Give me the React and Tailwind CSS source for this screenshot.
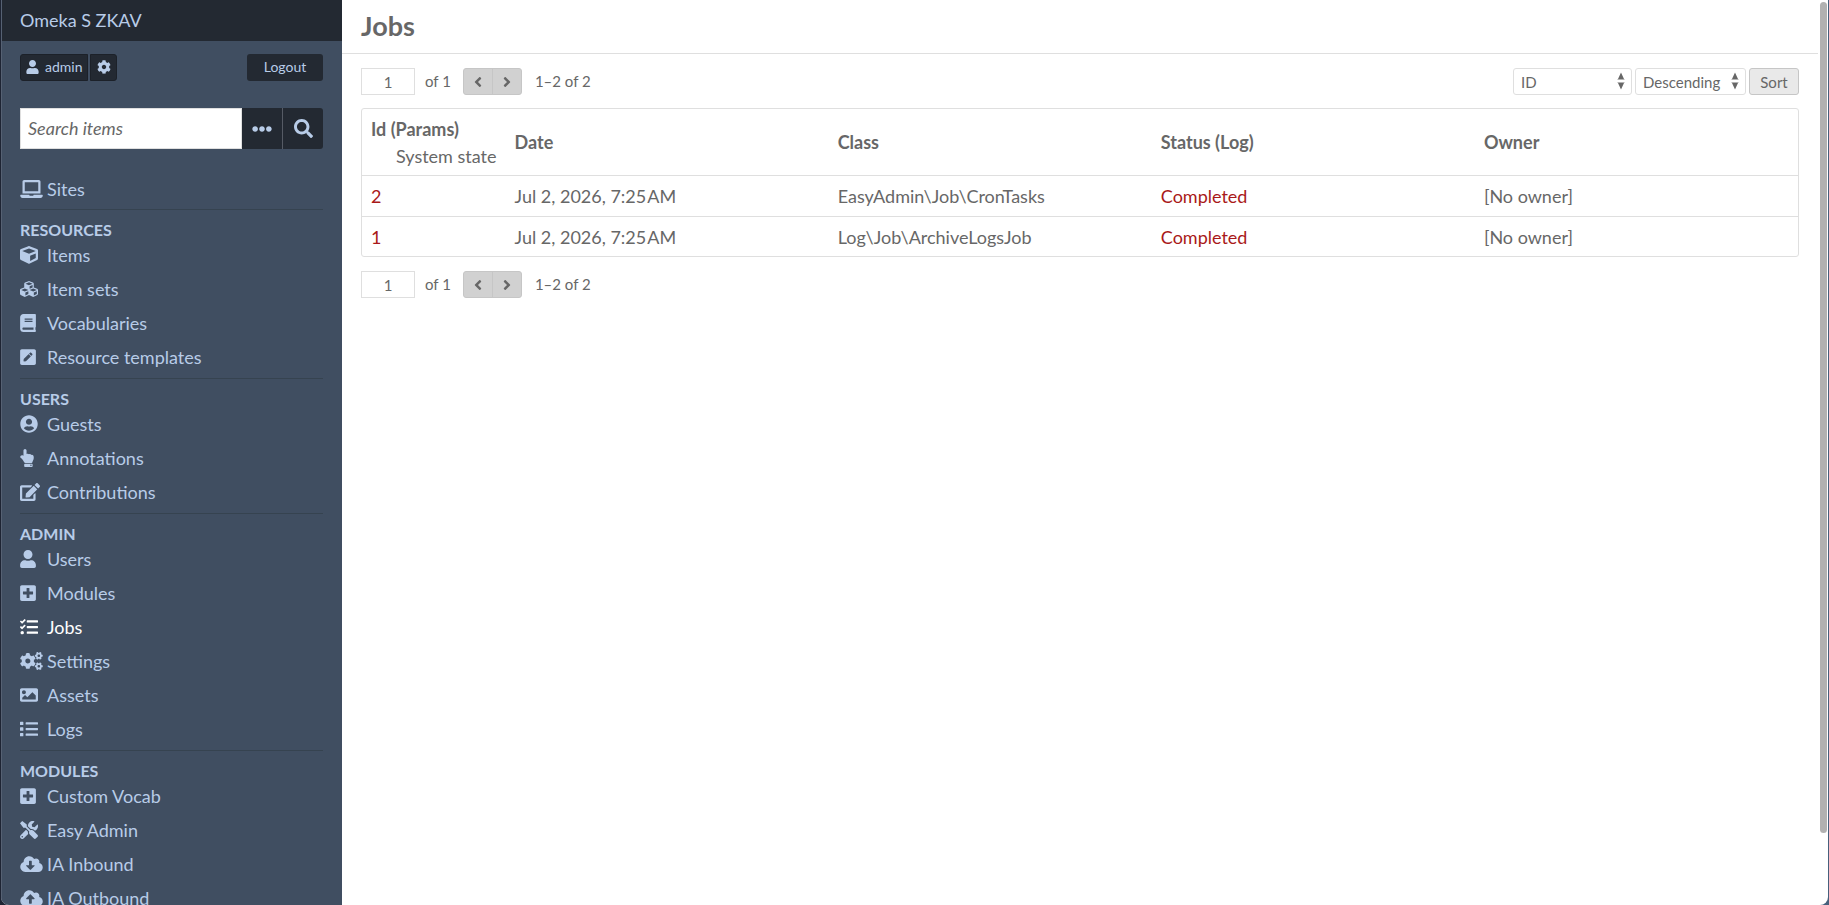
import { useState } from 'react'
import {
  FaAngleLeft, FaAngleRight, FaBook, FaCloudDownloadAlt, FaCloudUploadAlt, FaCog, FaCogs,
  FaCube, FaCubes, FaEdit, FaEllipsisH, FaHandPointUp, FaImage, FaLaptop, FaList,
  FaPenSquare, FaPlusSquare, FaSearch, FaTasks, FaTools, FaUser, FaUserCircle,
} from 'react-icons/fa'

const groups = [
  {
    title: 'Resources',
    items: [
      { label: 'Items', Icon: FaCube, size: 'w-[18px]' },
      { label: 'Item sets', Icon: FaCubes, size: 'w-[18px]' },
      { label: 'Vocabularies', Icon: FaBook, size: 'w-[16px]' },
      { label: 'Resource templates', Icon: FaPenSquare, size: 'w-[16px]' },
    ],
  },
  {
    title: 'Users',
    items: [
      { label: 'Guests', Icon: FaUserCircle, size: 'w-[18px]' },
      { label: 'Annotations', Icon: FaHandPointUp, size: 'w-[14px]' },
      { label: 'Contributions', Icon: FaEdit, size: 'w-[20px]' },
    ],
  },
  {
    title: 'Admin',
    items: [
      { label: 'Users', Icon: FaUser, size: 'w-[16px]' },
      { label: 'Modules', Icon: FaPlusSquare, size: 'w-[16px]' },
      { label: 'Jobs', Icon: FaTasks, size: 'w-[18px]', active: true },
      { label: 'Settings', Icon: FaCogs, size: 'w-[23px]' },
      { label: 'Assets', Icon: FaImage, size: 'w-[18px]' },
      { label: 'Logs', Icon: FaList, size: 'w-[18px]' },
    ],
  },
  {
    title: 'Modules',
    items: [
      { label: 'Custom Vocab', Icon: FaPlusSquare, size: 'w-[16px]' },
      { label: 'Easy Admin', Icon: FaTools, size: 'w-[18px]' },
      { label: 'IA Inbound', Icon: FaCloudDownloadAlt, size: 'w-[23px]' },
      { label: 'IA Outbound', Icon: FaCloudUploadAlt, size: 'w-[23px]' },
    ],
  },
]

const jobs = [
  { id: 2, date: 'Jul 2, 2026, 7:25\u200aAM', name: 'EasyAdmin\\Job\\CronTasks', status: 'Completed', owner: '[No owner]' },
  { id: 1, date: 'Jul 2, 2026, 7:25\u200aAM', name: 'Log\\Job\\ArchiveLogsJob', status: 'Completed', owner: '[No owner]' },
]

function NavLink({ label, Icon, size, active }) {
  return (
    <a href="#" className={`flex h-[34px] items-center ${active ? 'text-white' : 'text-[#b8cce8]'}`}>
      <span className="w-[27px] shrink-0">
        <Icon className={`h-[18px] ${size}`} />
      </span>
      {label}
    </a>
  )
}

function Sidebar() {
  return (
    <aside className="flex h-full w-[341px] shrink-0 flex-col overflow-hidden border-l border-[#566173] bg-[#404e61] text-[#b8cce8]">
      <div className="h-[41px] shrink-0 bg-[#232932] px-[18px] text-[18px] leading-[41px]">
        <a href="#">Omeka S ZKAV</a>
      </div>

      <div className="pr-[19px] pl-[18px]">
        {/* User bar */}
        <div className="mt-[13px] flex h-[27px] justify-between text-[14px] leading-[20px]">
          <div className="flex gap-[2px]">
            <a href="#" className="flex w-[68px] items-center gap-[6px] rounded-l-[3px] border border-[#1c2129] bg-[#232932] pb-px pl-[5px]">
              <FaUser className="h-[14px] w-[13px] shrink-0" />
              admin
            </a>
            <a href="#" aria-label="User settings" className="flex w-[27px] items-center justify-center rounded-r-[3px] border border-[#1c2129] bg-[#232932] pb-px">
              <FaCog className="h-[14px] w-[14px]" />
            </a>
          </div>
          <a href="#" className="flex w-[76px] items-center justify-center rounded-[3px] bg-[#232932] pb-px">Logout</a>
        </div>

        {/* Search */}
        <form className="mt-[27px] flex h-[41px]" onSubmit={e => e.preventDefault()}>
          <input
            type="text"
            aria-label="Search items"
            placeholder="Search items"
            className="min-w-0 flex-1 border border-[#dfdfdf] bg-white px-[7px] text-[18px] text-[#676767] placeholder:text-[#676767] placeholder:italic"
          />
          <button type="button" aria-label="Advanced options" className="flex w-[41px] items-center justify-center border-r border-[#565b65] bg-[#232932]">
            <FaEllipsisH className="h-[20px] w-[20px]" />
          </button>
          <button type="submit" aria-label="Search" className="flex w-[40px] items-center justify-center rounded-r-[3px] bg-[#232932]">
            <FaSearch className="h-[19px] w-[19px]" />
          </button>
        </form>

        <nav className="mt-[23px] text-[18px]">
          <div className="border-b border-[#364350] pb-[3px]">
            <NavLink label="Sites" Icon={FaLaptop} size="w-[23px]" />
          </div>
          {groups.map(g => (
            <section key={g.title} className="border-b border-[#364350] pb-[4px]">
              <h4 className="h-[28px] pt-[10px] text-[16px] leading-[20px] font-bold uppercase">{g.title}</h4>
              {g.items.map(item => <NavLink key={item.label} {...item} />)}
            </section>
          ))}
        </nav>
      </div>
    </aside>
  )
}

function Pagination() {
  const [page, setPage] = useState('1')
  return (
    <div className="flex h-[27px] items-center text-[15px]">
      <input
        type="text"
        aria-label="Page"
        value={page}
        onChange={e => setPage(e.target.value)}
        className="h-full w-[54px] border border-[#dfdfdf] text-center"
      />
      <span className="ml-[10px]">of 1</span>
      <div className="mr-[13px] ml-[12px] flex h-full overflow-hidden rounded-[3px] border border-[#c6c6c6] bg-[#d1d1d1]">
        <button aria-label="Previous page" className="flex w-[29px] items-center justify-center border-r border-[#c6c6c6]">
          <FaAngleLeft className="h-[16px] w-[10px]" />
        </button>
        <button aria-label="Next page" className="flex w-[28px] items-center justify-center">
          <FaAngleRight className="h-[16px] w-[10px]" />
        </button>
      </div>
      <span>1–2 of 2</span>
    </div>
  )
}

function SortSelect({ label, width, options }) {
  return (
    <div className={`relative h-full ${width}`}>
      <select aria-label={label} className="h-full w-full appearance-none rounded-[3px] border border-[#dfdfdf] bg-white px-[7px] pt-px text-[15px]">
        {options.map(o => <option key={o}>{o}</option>)}
      </select>
      <svg viewBox="0 0 8 18" className="pointer-events-none absolute top-[4px] right-[7px] h-[18px] w-[8px]" fill="#676767">
        <path d="M4 0.5 7 7H1ZM4 17.5 1 11H7Z" />
        <path d="M0.5 7H7.5V8H0.5ZM0.5 10H7.5V11H0.5Z" opacity="0.5" />
      </svg>
    </div>
  )
}

function SortForm() {
  return (
    <form className="flex h-[27px] gap-[3px]" onSubmit={e => e.preventDefault()}>
      <SortSelect label="Sort by" width="w-[119px]" options={['ID', 'Status', 'Owner']} />
      <SortSelect label="Sort order" width="w-[111px]" options={['Descending', 'Ascending']} />
      <button type="submit" className="w-[50px] rounded-[3px] border border-[#c6c6c6] bg-[#e9e9e9] text-[15px] leading-[24px]">Sort</button>
    </form>
  )
}

function JobsTable() {
  return (
    <div className="mt-[13px] mb-[14px] rounded-[3px] border border-[#dfdfdf]">
      <table className="w-full table-fixed border-collapse text-left text-[18px] leading-[27px]">
        <thead>
          <tr className="h-[66px] border-b border-[#dfdfdf]">
            <th className="w-[10%] pt-[3px] pl-[9px]">
              Id (Params)
              <div className="pl-[25px] font-normal whitespace-nowrap">System state</div>
            </th>
            <th className="w-[22.5%] pt-[2px] pl-[9px]">Date</th>
            <th className="w-[22.5%] pt-[2px] pl-[9px]">Class</th>
            <th className="w-[22.5%] pt-[2px] pl-[9px]">Status (Log)</th>
            <th className="w-[22.5%] pt-[2px] pl-[9px]">Owner</th>
          </tr>
        </thead>
        <tbody>
          {jobs.map(job => (
            <tr key={job.id} className="h-[41px] border-b border-[#dfdfdf] last:h-[40px] last:border-b-0">
              <td className="pt-[2px] pl-[9px]"><a href="#" className="text-[#a91919]">{job.id}</a></td>
              <td className="pt-[2px] pl-[9px]">{job.date}</td>
              <td className="pt-[2px] pl-[9px]">{job.name}</td>
              <td className="pt-[2px] pl-[9px]"><a href="#" className="text-[#a91919]">{job.status}</a></td>
              <td className="pt-[2px] pl-[9px]">{job.owner}</td>
            </tr>
          ))}
        </tbody>
      </table>
    </div>
  )
}

export default function App() {
  return (
    <div className="h-screen bg-linear-to-r from-[#1e2433] to-[#46607c] font-['Lato',sans-serif]">
      <div className="mx-px flex h-full overflow-hidden rounded-b-[8px] bg-white text-[#676767]">
        <Sidebar />
        <main className="min-w-0 flex-1">
          <header className="flex h-[54px] items-center border-b border-[#dfdfdf] px-[19px]">
            <h1 className="text-[27px] font-bold">Jobs</h1>
          </header>
          <div className="px-[19px] pt-[14px]">
            <div className="flex justify-between">
              <Pagination />
              <SortForm />
            </div>
            <JobsTable />
            <Pagination />
          </div>
        </main>
        {/* Scrollbar */}
        <div className="w-[10px] shrink-0 px-[2px] pt-[2px]">
          <div className="h-[92%] w-[7px] rounded-full bg-[#b1b1b1]" />
        </div>
      </div>
    </div>
  )
}
